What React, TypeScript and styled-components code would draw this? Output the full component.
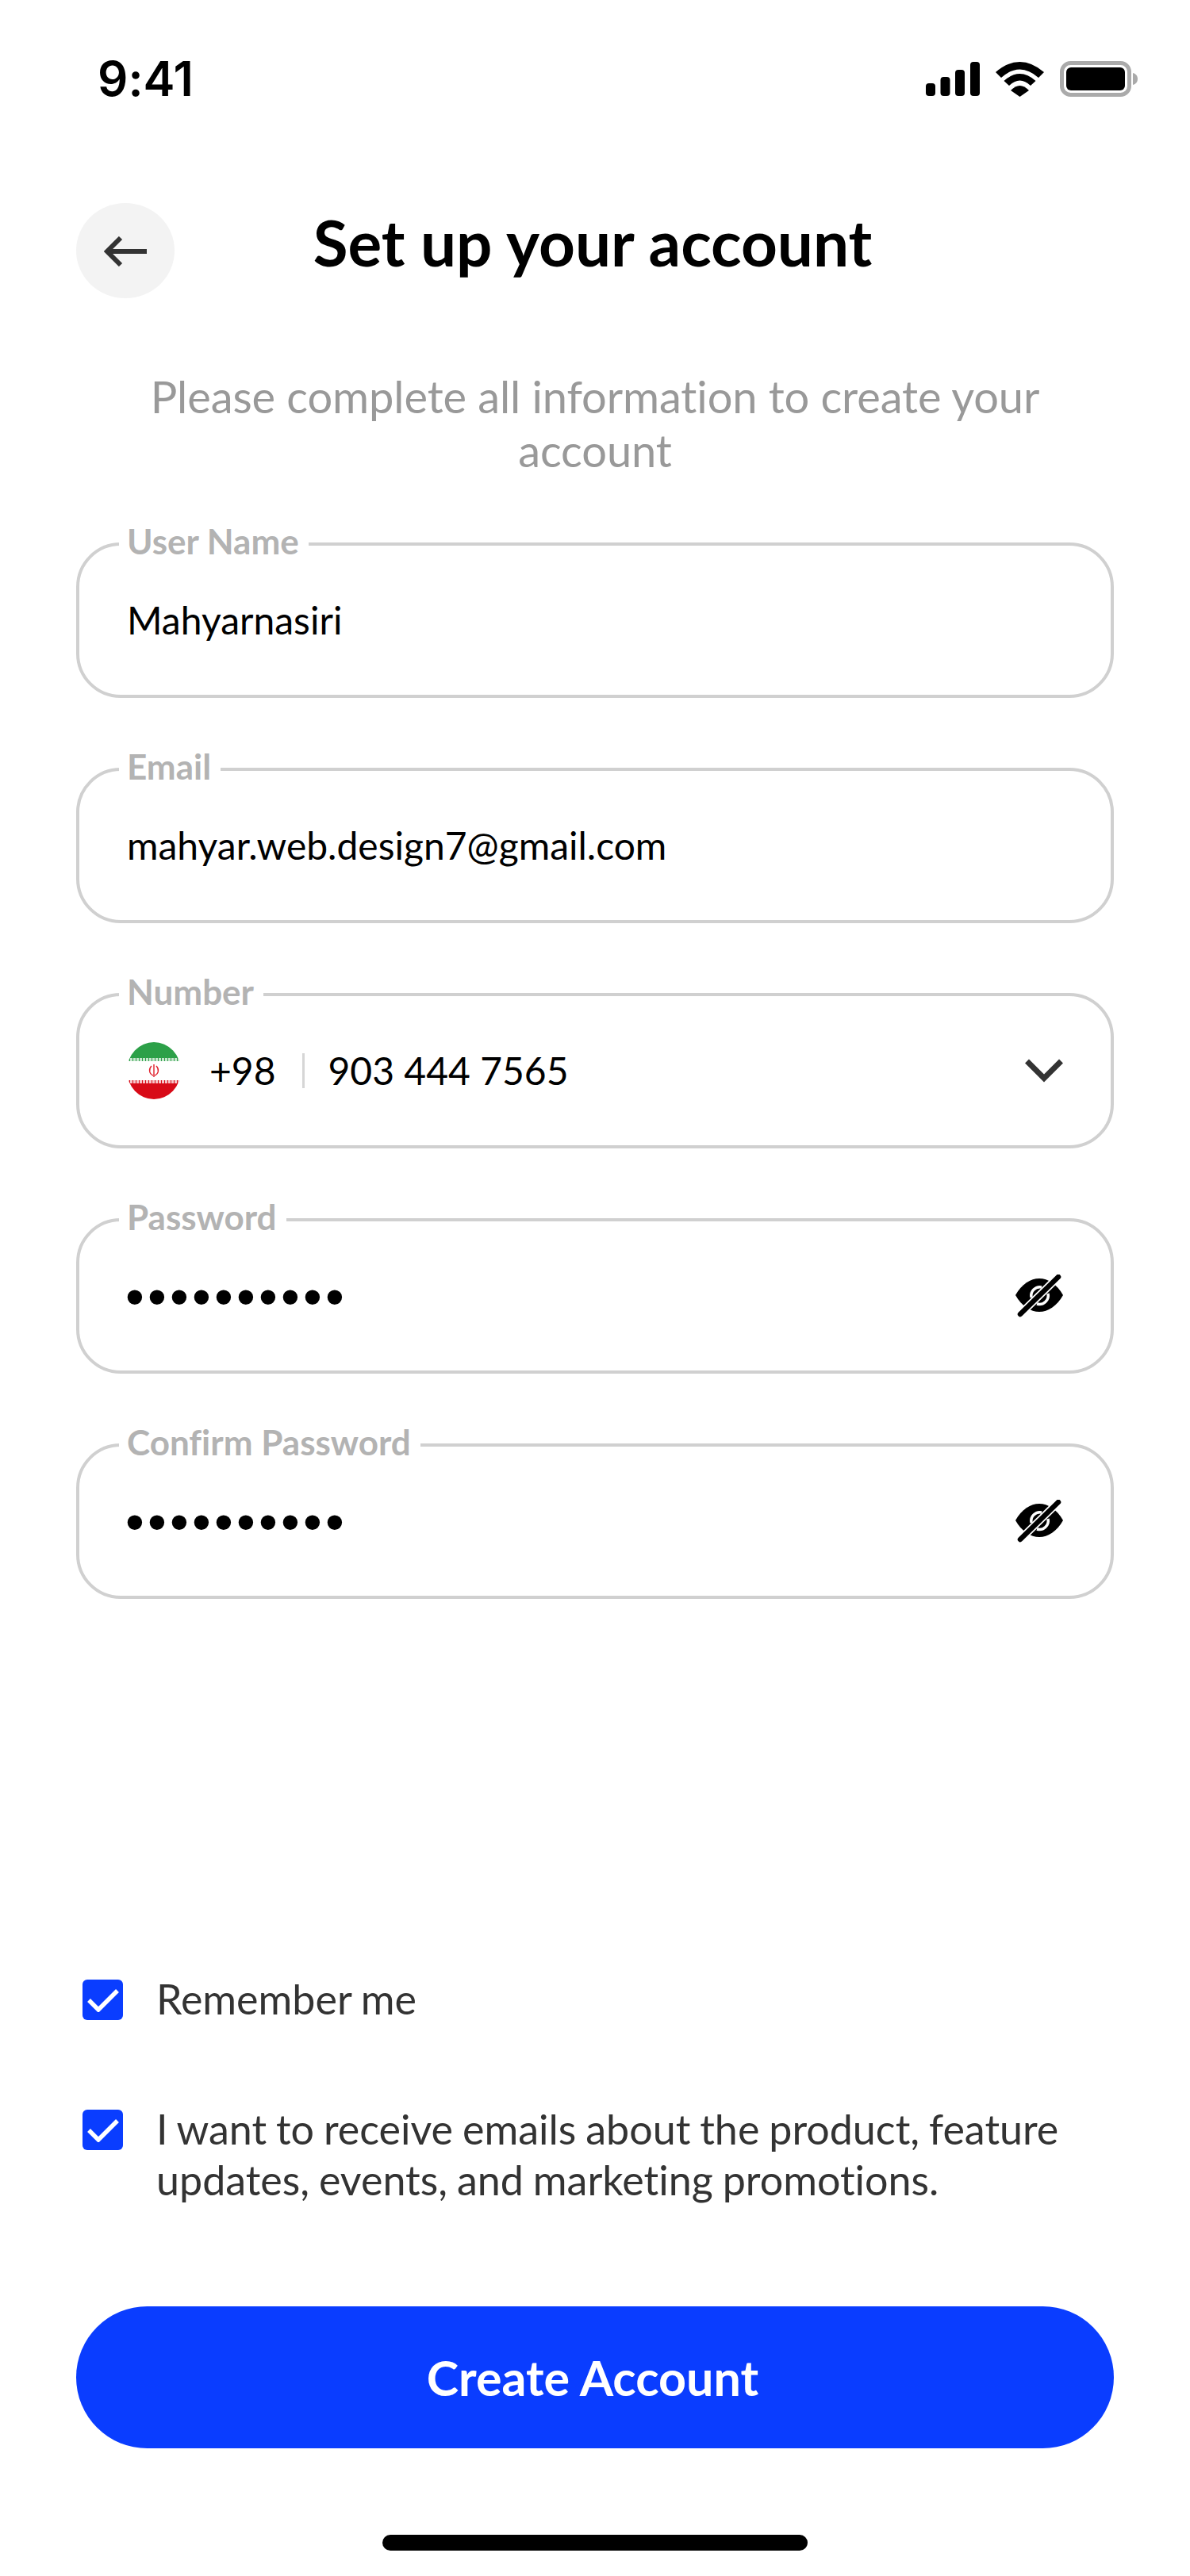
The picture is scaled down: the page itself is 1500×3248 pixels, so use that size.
import React from 'react';
import styled, { createGlobalStyle } from 'styled-components';

const GlobalStyle = createGlobalStyle`
  html, body {
    margin: 0;
    padding: 0;
    background: #fff;
  }
  * {
    box-sizing: border-box;
  }
`;

const Page = styled.div`
  width: 1500px;
  height: 3248px;
  background: #fff;
  font-family: Lato, 'Liberation Sans', sans-serif;
  font-variant-ligatures: none;
  display: flex;
  flex-direction: column;
`;

const StatusBar = styled.div`
  height: 256px;
  padding: 66px 66px 0 123px;
  display: flex;
  justify-content: space-between;
  align-items: flex-start;
`;

const Time = styled.div`
  font-family: Inter, 'Liberation Sans', sans-serif;
  font-size: 60px;
  font-weight: 600;
  line-height: 66px;
  color: #000;
`;

const StatusIcons = styled.div`
  display: flex;
  align-items: center;
  gap: 20px;
  margin-top: 11px;
`;

const Content = styled.div`
  padding: 0 96px;
  display: flex;
  flex-direction: column;
`;

const Header = styled.div`
  display: grid;
  grid-template-columns: 124px 1fr 124px;
  align-items: center;
`;

const BackButton = styled.button`
  width: 124px;
  height: 120px;
  border: none;
  border-radius: 50%;
  background: #f3f3f3;
  padding: 2px 0 0;
  display: flex;
  align-items: center;
  justify-content: center;
`;

const Title = styled.h1`
  margin: -22px 6px 0 0;
  font-size: 80px;
  font-weight: 700;
  line-height: 100px;
  color: #000;
  text-align: center;
`;

const Subtitle = styled.p`
  margin: 90px 0 0;
  padding: 0 60px;
  font-size: 56px;
  line-height: 68px;
  letter-spacing: -0.1px;
  color: #999;
  text-align: center;
`;

const Fields = styled.div`
  margin-top: 82px;
  display: flex;
  flex-direction: column;
  gap: 88px;
`;

const Field = styled.div`
  position: relative;
  height: 196px;
  border: 4px solid #d0d0d0;
  border-radius: 56px;
  padding: 0 60px;
  display: flex;
  align-items: center;
  justify-content: space-between;
  color: #000;
  font-size: 48px;
`;

const FieldLabel = styled.span`
  position: absolute;
  left: 50px;
  top: -32px;
  padding: 0 12px 0 10px;
  background: #fff;
  color: #b3b3b3;
  font-size: 44px;
  font-weight: 700;
  line-height: 52px;
`;

const Value = styled.span`
  line-height: 60px;
`;

const Dots = styled.span`
  font-family: 'Liberation Sans', sans-serif;
  font-size: 68px;
  line-height: 60px;
  letter-spacing: 4.2px;
  margin-left: -2px;
`;

const PhoneGroup = styled.div`
  display: flex;
  align-items: center;
`;

const DialCode = styled.span`
  margin-left: 36px;
  line-height: 60px;
`;

const PhoneDivider = styled.span`
  width: 3px;
  height: 44px;
  margin: 0 30px 0 33px;
  background: #d6d6d6;
`;

const IconSlot = styled.span`
  display: flex;
`;

const Options = styled.div`
  margin-top: 480px;
  display: flex;
  flex-direction: column;
  gap: 100px;
  padding-left: 8px;
`;

const Option = styled.label`
  display: flex;
  align-items: flex-start;
  gap: 42px;
  font-size: 52px;
  line-height: 64px;
  word-spacing: -1.4px;
  color: #333;
`;

const OptionText = styled.span`
  margin-top: -8px;
  margin-bottom: 8px;
`;

const CheckBox = styled.span`
  flex: none;
  width: 51px;
  height: 51px;
  border-radius: 6px;
  background: #0a3dff;
  display: flex;
  align-items: center;
  justify-content: center;
`;

const SubmitButton = styled.button`
  margin-top: 120px;
  height: 179px;
  border: none;
  border-radius: 90px;
  padding: 0 6px 0 0;
  background: #0a3dff;
  color: #fff;
  font-family: inherit;
  font-size: 61px;
  font-weight: 700;
`;

const HomeIndicator = styled.div`
  width: 536px;
  height: 20px;
  margin: 109px auto 0;
  border-radius: 10px;
  background: #000;
`;

const SignalIcon = () => (
  <svg width="68" height="43" viewBox="0 0 68 43" fill="#000">
    <rect x="0" y="27" width="12" height="16" rx="4" />
    <rect x="18.5" y="19" width="12" height="24" rx="4" />
    <rect x="37" y="10" width="12" height="33" rx="4" />
    <rect x="56" y="0" width="12" height="43" rx="4" />
  </svg>
);

const WifiIcon = () => (
  <svg width="61" height="44" viewBox="0 0 61 44" fill="#000">
    <path d="M0 13 Q30.5 -13 61 13 L54 20 Q30.5 -1 7 20 Z" />
    <path d="M10.5 24 Q30.5 6 50.5 24 L44 30 Q30.5 17 17 30 Z" />
    <path d="M19 36 Q30.5 24 42 36 L30.5 44 Z" />
  </svg>
);

const BatteryIcon = () => (
  <svg width="98" height="45" viewBox="0 0 98 45">
    <rect x="2.5" y="2.5" width="85" height="40" rx="11" fill="none" stroke="#aaa" strokeWidth="5" />
    <rect x="8" y="8" width="74" height="29" rx="6" fill="#000" />
    <path d="M92 15 C96 16 98 19 98 22.5 C98 26 96 29 92 30 Z" fill="#aaa" />
  </svg>
);

const BackArrow = () => (
  <svg width="54" height="38" viewBox="0 0 54 38" fill="none" stroke="#333" strokeWidth="6">
    <path d="M54 19 H4" />
    <path d="M21 2 L4 19 L21 36" />
  </svg>
);

const Chevron = () => (
  <svg width="48" height="30" viewBox="0 0 48 30" fill="none" stroke="#333" strokeWidth="7">
    <path d="M2.5 3 L24 24.5 L45.5 3" />
  </svg>
);

const EyeOff = () => (
  <svg width="60" height="54" viewBox="0 0 60 54">
    <path d="M0 26 C8 12 19 5 30 5 C41 5 52 12 60 26 C52 40 41 47 30 47 C19 47 8 40 0 26 Z" fill="#000" />
    <path d="M33 16 A11 11 0 0 0 20 29" fill="none" stroke="#fff" strokeWidth="3.5" />
    <path d="M27 37 A11 11 0 0 0 41 24" fill="none" stroke="#fff" strokeWidth="3.5" />
    <path d="M6 50 L54 3" stroke="#fff" strokeWidth="10" />
    <path d="M6 50 L54 3" stroke="#000" strokeWidth="6.5" strokeLinecap="round" />
  </svg>
);

const CheckMark = () => (
  <svg width="40" height="30" viewBox="0 0 40 30" fill="none" stroke="#fff" strokeWidth="5.5">
    <path d="M2 15 L14 27 L38 3" />
  </svg>
);

const IranFlag = () => (
  <svg width="68" height="72" viewBox="0 0 68 72">
    <defs>
      <clipPath id="flag-clip">
        <ellipse cx="34" cy="36" rx="34" ry="36" />
      </clipPath>
    </defs>
    <g clipPath="url(#flag-clip)">
      <rect width="68" height="24" fill="#2ca048" />
      <rect y="24" width="68" height="24" fill="#fff" />
      <rect y="48" width="68" height="24" fill="#d80a17" />
      <path d="M0 22 H68" stroke="#c9e6cf" strokeWidth="4" strokeDasharray="3 1" />
      <path d="M0 50 H68" stroke="#f6c4c7" strokeWidth="4" strokeDasharray="3 1" />
      <g fill="none" stroke="#e0202c" strokeWidth="1.4">
        <path d="M34 28 V44" />
        <path d="M31 30 C27 34 28 40 33 42" />
        <path d="M37 30 C41 34 40 40 35 42" />
      </g>
    </g>
  </svg>
);

const fields = [
  { label: 'User Name', value: 'Mahyarnasiri' },
  { label: 'Email', value: 'mahyar.web.design7@gmail.com' },
];

const passwords = ['Password', 'Confirm Password'];

const App = () => (
  <Page>
    <GlobalStyle />
    <StatusBar>
      <Time>9:41</Time>
      <StatusIcons>
        <SignalIcon />
        <WifiIcon />
        <BatteryIcon />
      </StatusIcons>
    </StatusBar>
    <Content>
      <Header>
        <BackButton>
          <BackArrow />
        </BackButton>
        <Title>Set up your account</Title>
      </Header>
      <Subtitle>Please complete all information to create your account</Subtitle>
      <Fields>
        {fields.map((field) => (
          <Field key={field.label}>
            <FieldLabel>{field.label}</FieldLabel>
            <Value>{field.value}</Value>
          </Field>
        ))}
        <Field>
          <FieldLabel>Number</FieldLabel>
          <PhoneGroup>
            <IranFlag />
            <DialCode>+98</DialCode>
            <PhoneDivider />
            <Value>903 444 7565</Value>
          </PhoneGroup>
          <IconSlot>
            <Chevron />
          </IconSlot>
        </Field>
        {passwords.map((label) => (
          <Field key={label}>
            <FieldLabel>{label}</FieldLabel>
            <Dots>••••••••••</Dots>
            <IconSlot>
              <EyeOff />
            </IconSlot>
          </Field>
        ))}
      </Fields>
      <Options>
        <Option>
          <CheckBox>
            <CheckMark />
          </CheckBox>
          <OptionText>Remember me</OptionText>
        </Option>
        <Option>
          <CheckBox>
            <CheckMark />
          </CheckBox>
          <OptionText>I want to receive emails about the product, feature updates, events, and marketing promotions.</OptionText>
        </Option>
      </Options>
      <SubmitButton>Create Account</SubmitButton>
    </Content>
    <HomeIndicator />
  </Page>
);

export default App;
